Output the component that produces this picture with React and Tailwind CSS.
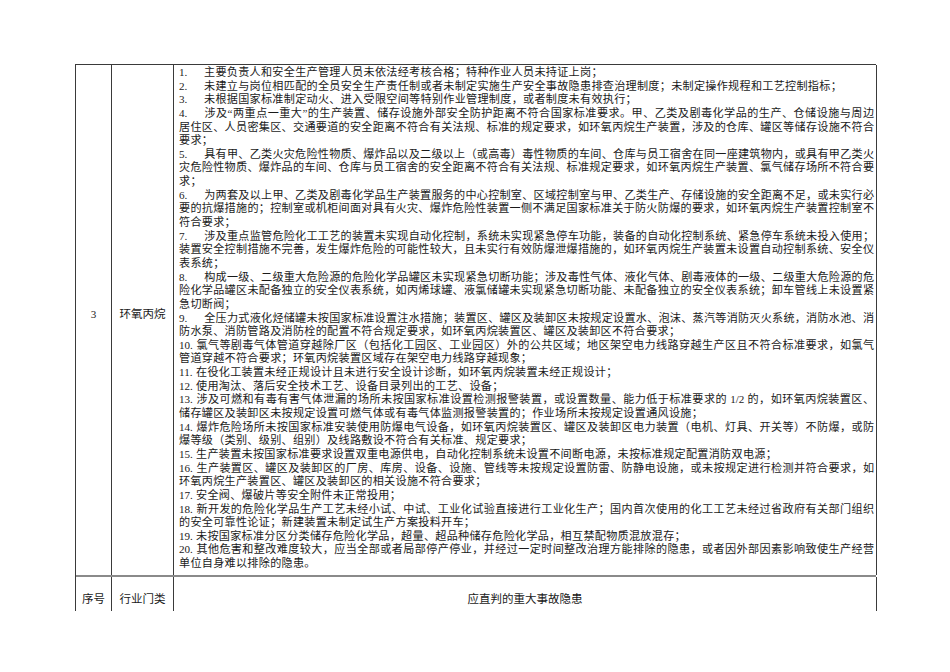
import React from "react";

// each item: [number, [ [text, full], ... ] ]  full = justified to the right edge
const ITEMS = [
  [1, [["主要负责人和安全生产管理人员未依法经考核合格；特种作业人员未持证上岗；", false]]],
  [2, [["未建立与岗位相匹配的全员安全生产责任制或者未制定实施生产安全事故隐患排查治理制度；未制定操作规程和工艺控制指标；", false]]],
  [3, [["未根据国家标准制定动火、进入受限空间等特别作业管理制度，或者制度未有效执行；", false]]],
  [4, [
    ["涉及“两重点一重大”的生产装置、储存设施外部安全防护距离不符合国家标准要求。甲、乙类及剧毒化学品的生产、仓储设施与周边", true],
    ["居住区、人员密集区、交通要道的安全距离不符合有关法规、标准的规定要求，如环氧丙烷生产装置，涉及的仓库、罐区等储存设施不符合", true],
    ["要求；", false],
  ]],
  [5, [
    ["具有甲、乙类火灾危险性物质、爆炸品以及二级以上（或高毒）毒性物质的车间、仓库与员工宿舍在同一座建筑物内，或具有甲乙类火", true],
    ["灾危险性物质、爆炸品的车间、仓库与员工宿舍的安全距离不符合有关法规、标准规定要求，如环氧丙烷生产装置、氯气储存场所不符合要", true],
    ["求；", false],
  ]],
  [6, [
    ["为两套及以上甲、乙类及剧毒化学品生产装置服务的中心控制室、区域控制室与甲、乙类生产、存储设施的安全距离不足，或未实行必", true],
    ["要的抗爆措施的；控制室或机柜间面对具有火灾、爆炸危险性装置一侧不满足国家标准关于防火防爆的要求，如环氧丙烷生产装置控制室不", true],
    ["符合要求；", false],
  ]],
  [7, [
    ["涉及重点监管危险化工工艺的装置未实现自动化控制，系统未实现紧急停车功能，装备的自动化控制系统、紧急停车系统未投入使用；", true],
    ["装置安全控制措施不完善，发生爆炸危险的可能性较大，且未实行有效防爆泄爆措施的，如环氧丙烷生产装置未设置自动控制系统、安全仪", true],
    ["表系统；", false],
  ]],
  [8, [
    ["构成一级、二级重大危险源的危险化学品罐区未实现紧急切断功能；涉及毒性气体、液化气体、剧毒液体的一级、二级重大危险源的危", true],
    ["险化学品罐区未配备独立的安全仪表系统，如丙烯球罐、液氯储罐未实现紧急切断功能、未配备独立的安全仪表系统；卸车管线上未设置紧", true],
    ["急切断阀；", false],
  ]],
  [9, [
    ["全压力式液化烃储罐未按国家标准设置注水措施；装置区、罐区及装卸区未按规定设置水、泡沫、蒸汽等消防灭火系统，消防水池、消", true],
    ["防水泵、消防管路及消防栓的配置不符合规定要求，如环氧丙烷装置区、罐区及装卸区不符合要求；", false],
  ]],
  [10, [
    ["氯气等剧毒气体管道穿越除厂区（包括化工园区、工业园区）外的公共区域；地区架空电力线路穿越生产区且不符合标准要求，如氯气", true],
    ["管道穿越不符合要求；环氧丙烷装置区域存在架空电力线路穿越现象；", false],
  ]],
  [11, [["在役化工装置未经正规设计且未进行安全设计诊断，如环氧丙烷装置未经正规设计；", false]]],
  [12, [["使用淘汰、落后安全技术工艺、设备目录列出的工艺、设备；", false]]],
  [13, [
    ["涉及可燃和有毒有害气体泄漏的场所未按国家标准设置检测报警装置，或设置数量、能力低于标准要求的 1/2 的，如环氧丙烷装置区、", true],
    ["储存罐区及装卸区未按规定设置可燃气体或有毒气体监测报警装置的；作业场所未按规定设置通风设施；", false],
  ]],
  [14, [
    ["爆炸危险场所未按国家标准安装使用防爆电气设备，如环氧丙烷装置区、罐区及装卸区电力装置（电机、灯具、开关等）不防爆，或防", true],
    ["爆等级（类别、级别、组别）及线路敷设不符合有关标准、规定要求；", false],
  ]],
  [15, [["生产装置未按国家标准要求设置双重电源供电，自动化控制系统未设置不间断电源，未按标准规定配置消防双电源；", false]]],
  [16, [
    ["生产装置区、罐区及装卸区的厂房、库房、设备、设施、管线等未按规定设置防雷、防静电设施，或未按规定进行检测并符合要求，如", true],
    ["环氧丙烷生产装置区、罐区及装卸区的相关设施不符合要求；", false],
  ]],
  [17, [["安全阀、爆破片等安全附件未正常投用；", false]]],
  [18, [
    ["新开发的危险化学品生产工艺未经小试、中试、工业化试验直接进行工业化生产；国内首次使用的化工工艺未经过省政府有关部门组织", true],
    ["的安全可靠性论证；新建装置未制定试生产方案投料开车；", false],
  ]],
  [19, [["未按国家标准分区分类储存危险化学品，超量、超品种储存危险化学品，相互禁配物质混放混存；", false]]],
  [20, [
    ["其他危害和整改难度较大，应当全部或者局部停产停业，并经过一定时间整改治理方能排除的隐患，或者因外部因素影响致使生产经营", true],
    ["单位自身难以排除的隐患。", false],
  ]],
];

// full lines get stretched by justify; short lines get a little tracking instead
const Line = ({ num, text, full }) => (
  <div
    className={
      "h-[13.65px] overflow-visible " +
      (full ? "text-justify [text-align-last:justify]" : "text-left tracking-[0.3px]")
    }
  >
    {num != null && (
      <span className={"inline-block tracking-normal " + (num < 10 ? "w-[25px]" : "w-[17px]")}>
        {num}.
      </span>
    )}
    {text}
  </div>
);

export default function App() {
  return (
    <div
      className="min-h-[672px] w-[950px] bg-white pt-[64px] pl-[75px] text-[11.1px] leading-[13.65px] text-[#1a1a1a]"
      style={{ fontFamily: '"Liberation Serif", "Noto Sans CJK SC", serif' }}
    >
      <div className="w-[801px] border-t border-l border-[#3a3a3a]">
        {/* big row */}
        <div className="flex h-[510px]">
          <div className="flex w-[36px] shrink-0 items-center justify-center border-r border-[#3a3a3a] pb-[10px]">
            3
          </div>
          <div className="flex w-[62px] shrink-0 items-center justify-center border-r border-[#3a3a3a] pb-[10px] text-[11.5px]">
            环氧丙烷
          </div>
          <div className="w-[703px] shrink-0 border-r border-[#3a3a3a] pt-[1px] pr-[2px] pl-[5px]">
            {ITEMS.map(([num, lines]) =>
              lines.map(([text, full], i) => (
                <Line key={num + "-" + i} num={i === 0 ? num : null} text={text} full={full} />
              ))
            )}
          </div>
        </div>

        {/* header row */}
        <div className="flex h-[36px] border-t-2 border-[#8a8a8a] text-[11.5px]">
          <div className="w-[36px] shrink-0 border-r border-[#3a3a3a] pt-[16px] text-center">
            序号
          </div>
          <div className="w-[62px] shrink-0 border-r border-[#3a3a3a] pt-[16px] text-center">
            行业门类
          </div>
          <div className="w-[703px] shrink-0 border-r border-[#3a3a3a] pt-[16px] text-center">
            应直判的重大事故隐患
          </div>
        </div>
      </div>
    </div>
  );
}
